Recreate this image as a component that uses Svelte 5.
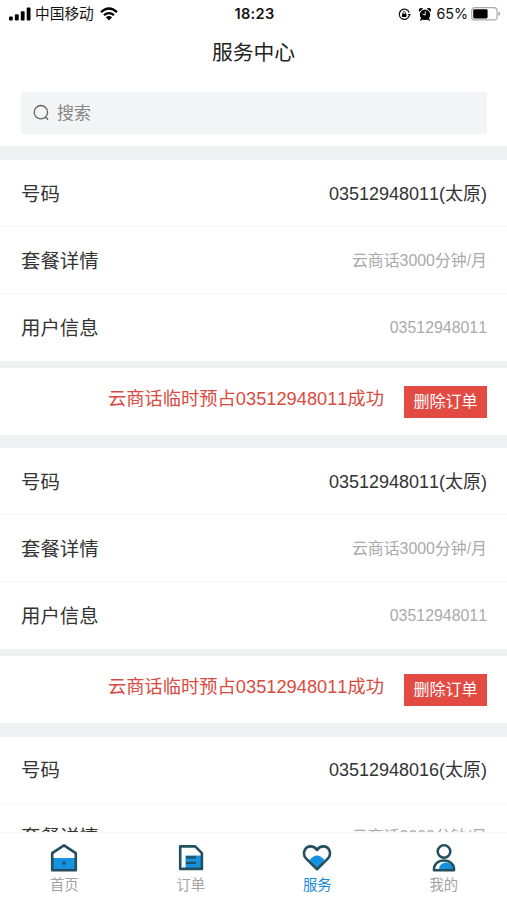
<script lang="ts">
  type Order = { number: string; city: string; plan: string };

  const orders: Order[] = [
    { number: "03512948011", city: "太原", plan: "云商话3000分钟/月" },
    { number: "03512948011", city: "太原", plan: "云商话3000分钟/月" },
    { number: "03512948016", city: "太原", plan: "云商话3000分钟/月" },
  ];

  const tabs = [
    { id: "home", label: "首页" },
    { id: "order", label: "订单" },
    { id: "service", label: "服务" },
    { id: "mine", label: "我的" },
  ];

  let active = $state("service");
</script>

<div class="phone">
  <div class="status">
    <div class="carrier">
      <svg class="signal" width="22" height="14" viewBox="0 0 22 14">
        <rect x="0" y="9.5" width="3.8" height="4" rx="1" />
        <rect x="5.9" y="7.2" width="3.8" height="6.3" rx="1" />
        <rect x="11.8" y="4.2" width="3.8" height="9.3" rx="1" />
        <rect x="17.7" y="0.5" width="3.8" height="13" rx="1" />
      </svg>
      <span>中国移动</span>
      <svg class="wifi" width="18" height="14" viewBox="0 0 18 14">
        <path d="M1 5.1Q9-2 17 5.1M4 8.2q5-4.2 10 0" fill="none" stroke="#000" stroke-width="2.3" />
        <path d="M5.9 10.3q3.1-2.6 6.2 0L9 13.5z" />
      </svg>
    </div>
    <time>18:23</time>
    <div class="power">
      <svg width="13" height="13" viewBox="0 0 13 13">
        <path d="M11.3 7.7A5.1 5.1 0 1 1 11.2 4.6" fill="none" stroke="#111" stroke-width="1.2" />
        <path d="M9.8 6.1h3.1l-1.5 2.2z" />
        <rect x="4" y="5.8" width="4.4" height="3.3" rx=".4" />
        <path d="M4.9 6V4.8a1.3 1.3 0 0 1 2.6 0V6" fill="none" stroke="#111" stroke-width=".8" />
      </svg>
      <svg class="alarm" width="12" height="13" viewBox="0 0 12 13">
        <circle cx="6" cy="6.8" r="5.2" />
        <path d="M.3 3.4A2.2 2.2 0 0 1 3.7.7zM11.7 3.4A2.2 2.2 0 0 0 8.3.7zM1.2 12.6l1.5-3 1.9 1.4zM10.8 12.6L9.3 9.6l-1.9 1.4z" stroke="#000" stroke-width=".6" />
        <path d="M6.2 3.5v3.6L3.7 6" fill="none" stroke="#fff" stroke-width=".9" />
      </svg>
      <span>65%</span>
      <svg class="battery" width="30" height="14" viewBox="0 0 30 14">
        <rect x=".7" y=".7" width="25.4" height="12.2" rx="3.2" fill="#fff" stroke="#aaa" stroke-width="1.2" />
        <rect x="2.2" y="2.2" width="14.4" height="9.2" rx="1.4" />
        <path d="M27.5 4.5q1.8.6 1.8 2.3t-1.8 2.3z" fill="#aaa" />
      </svg>
    </div>
  </div>

  <h1>服务中心</h1>

  <div class="search">
    <svg width="18" height="18" viewBox="0 0 18 18" fill="none" stroke="#666" stroke-width="1.3">
      <circle cx="7.9" cy="8.2" r="6.7" />
      <path d="M12.4 12.8l2.7 2.9" />
    </svg>
    <input type="text" placeholder="搜索" />
  </div>

  <main>
    {#each orders as order}
      <section>
        <div class="row">
          <span class="label">号码</span>
          <span class="number">{order.number}({order.city})</span>
        </div>
        <div class="row">
          <span class="label">套餐详情</span>
          <span class="value">{order.plan}</span>
        </div>
        <div class="row">
          <span class="label">用户信息</span>
          <span class="value">{order.number}</span>
        </div>
        <div class="result">
          <span>云商话临时预占{order.number}成功</span>
          <button>删除订单</button>
        </div>
      </section>
    {/each}
  </main>

  <nav>
    {#each tabs as tab}
      <button class="tab" class:active={active === tab.id} onclick={() => (active = tab.id)}>
        <svg width="30" height="30" viewBox="0 0 30 30" fill="none" stroke="#23505e" stroke-width="2.6" stroke-linejoin="round">
          {#if tab.id === "home"}
            <path class="fill" d="M3 15h24v12H3z" />
            <path d="M3.2 10.2L15 2.3l11.8 7.9v17H3.2z" />
            <path d="M15 18.2v4M13.3 20.2h3.4" stroke-width="1.3" />
          {:else if tab.id === "order"}
            <path class="fill" d="M9.5 12.5h16v13H9.5z" />
            <path d="M4.2 3.4h15l6.7 6.7v15.8H4.2z" />
            <path d="M10 14.3h10M10 19.8h10" stroke-width="2.3" />
          {:else if tab.id === "service"}
            <path class="fill" d="M7.5 17q7.5-9 15 0L15 25.5z" />
            <path d="M15 26.2L4.2 15.6C-.4 10.5 3 3.4 8.6 3.4c2.7 0 4.8 1.2 6.4 3.6 1.6-2.4 3.7-3.6 6.4-3.6 5.6 0 9 7.1 4.4 12.2z" />
          {:else}
            <path class="fill" d="M10 27c0-5 3-7.7 8-7.5 4.4 1 6 3.5 7 7.5z" />
            <circle cx="15" cy="8.5" r="6.3" />
            <path d="M5 27.2c-.4-6 4-9.7 10-9.7s10.4 3.7 10 9.7z" />
          {/if}
        </svg>
        <span>{tab.label}</span>
      </button>
    {/each}
  </nav>
</div>

<style>
  :global(body) {
    background: #fff;
  }

  .phone {
    display: flex;
    flex-direction: column;
    height: 900px;
    overflow: hidden;
    background: #fff;
    color: #333;
    font-family: "Liberation Sans", "Noto Sans CJK SC", sans-serif;
    font-kerning: none;
  }

  .status {
    display: grid;
    grid-template-columns: 1fr auto 1fr;
    align-items: center;
    height: 28px;
    padding: 0 6px 0 9px;
    flex: none;
    color: #111;
    font-size: 14.7px;
    line-height: 28px;
  }

  .carrier,
  .power {
    display: flex;
    align-items: center;
  }

  .carrier span {
    margin: 0 6px 0 4px;
  }

  .power {
    justify-content: flex-end;
    font-family: Inter, sans-serif;
    font-size: 14.3px;
  }

  .alarm {
    margin: 0 5px 0 8px;
  }

  .battery {
    margin-left: 3px;
  }

  time {
    margin-right: 1px;
    font-family: Inter, sans-serif;
    font-weight: 600;
    font-size: 14.6px;
    letter-spacing: 0.3px;
  }

  h1 {
    flex: none;
    margin: 0;
    height: 64px;
    line-height: 49px;
    text-align: center;
    font-size: 20.8px;
    font-weight: 400;
    color: #222;
  }

  .search {
    display: flex;
    align-items: center;
    flex: none;
    height: 42px;
    margin: 0 20px 12px 21px;
    padding-left: 12px;
    border-radius: 2px;
    background: #f3f4f6;
  }

  .search input {
    flex: 1;
    min-width: 0;
    padding: 2px 0 0;
    margin-left: 6px;
    border: 0;
    outline: 0;
    background: none;
    font: inherit;
    font-size: 17px;
  }

  .search input::placeholder {
    color: #858585;
  }

  main {
    flex: 1;
    min-height: 0;
    overflow: hidden;
    padding-top: 14px;
    background: #eef0f2;
  }

  section {
    margin-bottom: 13.3px;
    background: #fff;
  }

  .row {
    display: flex;
    align-items: center;
    justify-content: space-between;
    box-sizing: border-box;
    height: 67px;
    padding: 1px 20px 0 21px;
    border-bottom: 1px solid #f6f6f6;
    line-height: 28px;
  }

  .row:nth-child(3) {
    border-bottom: 0;
  }

  .label {
    font-size: 19.4px;
  }

  .number {
    font-size: 18px;
  }

  .value {
    font-size: 15.9px;
    color: #aaa;
  }

  .result {
    display: flex;
    align-items: center;
    justify-content: flex-end;
    height: 67px;
    padding-right: 20px;
    border-top: 7px solid #eff1f2;
    color: #d94b40;
    font-size: 18.25px;
  }

  .result span {
    padding-bottom: 9px;
  }

  .result button {
    width: 83px;
    height: 32px;
    margin-left: 20px;
    padding: 0;
    border: 0;
    background: #e24a42;
    color: #fff;
    font: inherit;
    font-size: 16px;
    line-height: 32px;
  }

  nav {
    display: flex;
    flex: none;
    height: 68px;
    box-sizing: border-box;
    padding-left: 1px;
    border-top: 1px solid #f7f8f8;
    background: #fff;
  }

  .tab {
    display: flex;
    flex: 1;
    flex-direction: column;
    align-items: center;
    padding: 10px 0 0;
    border: 0;
    background: none;
    color: #a3a3a3;
    font: inherit;
    font-size: 14.3px;
    line-height: 24px;
  }

  .tab.active {
    color: #1688d8;
  }

  .fill {
    fill: #1592e0;
    stroke: none;
  }
</style>
